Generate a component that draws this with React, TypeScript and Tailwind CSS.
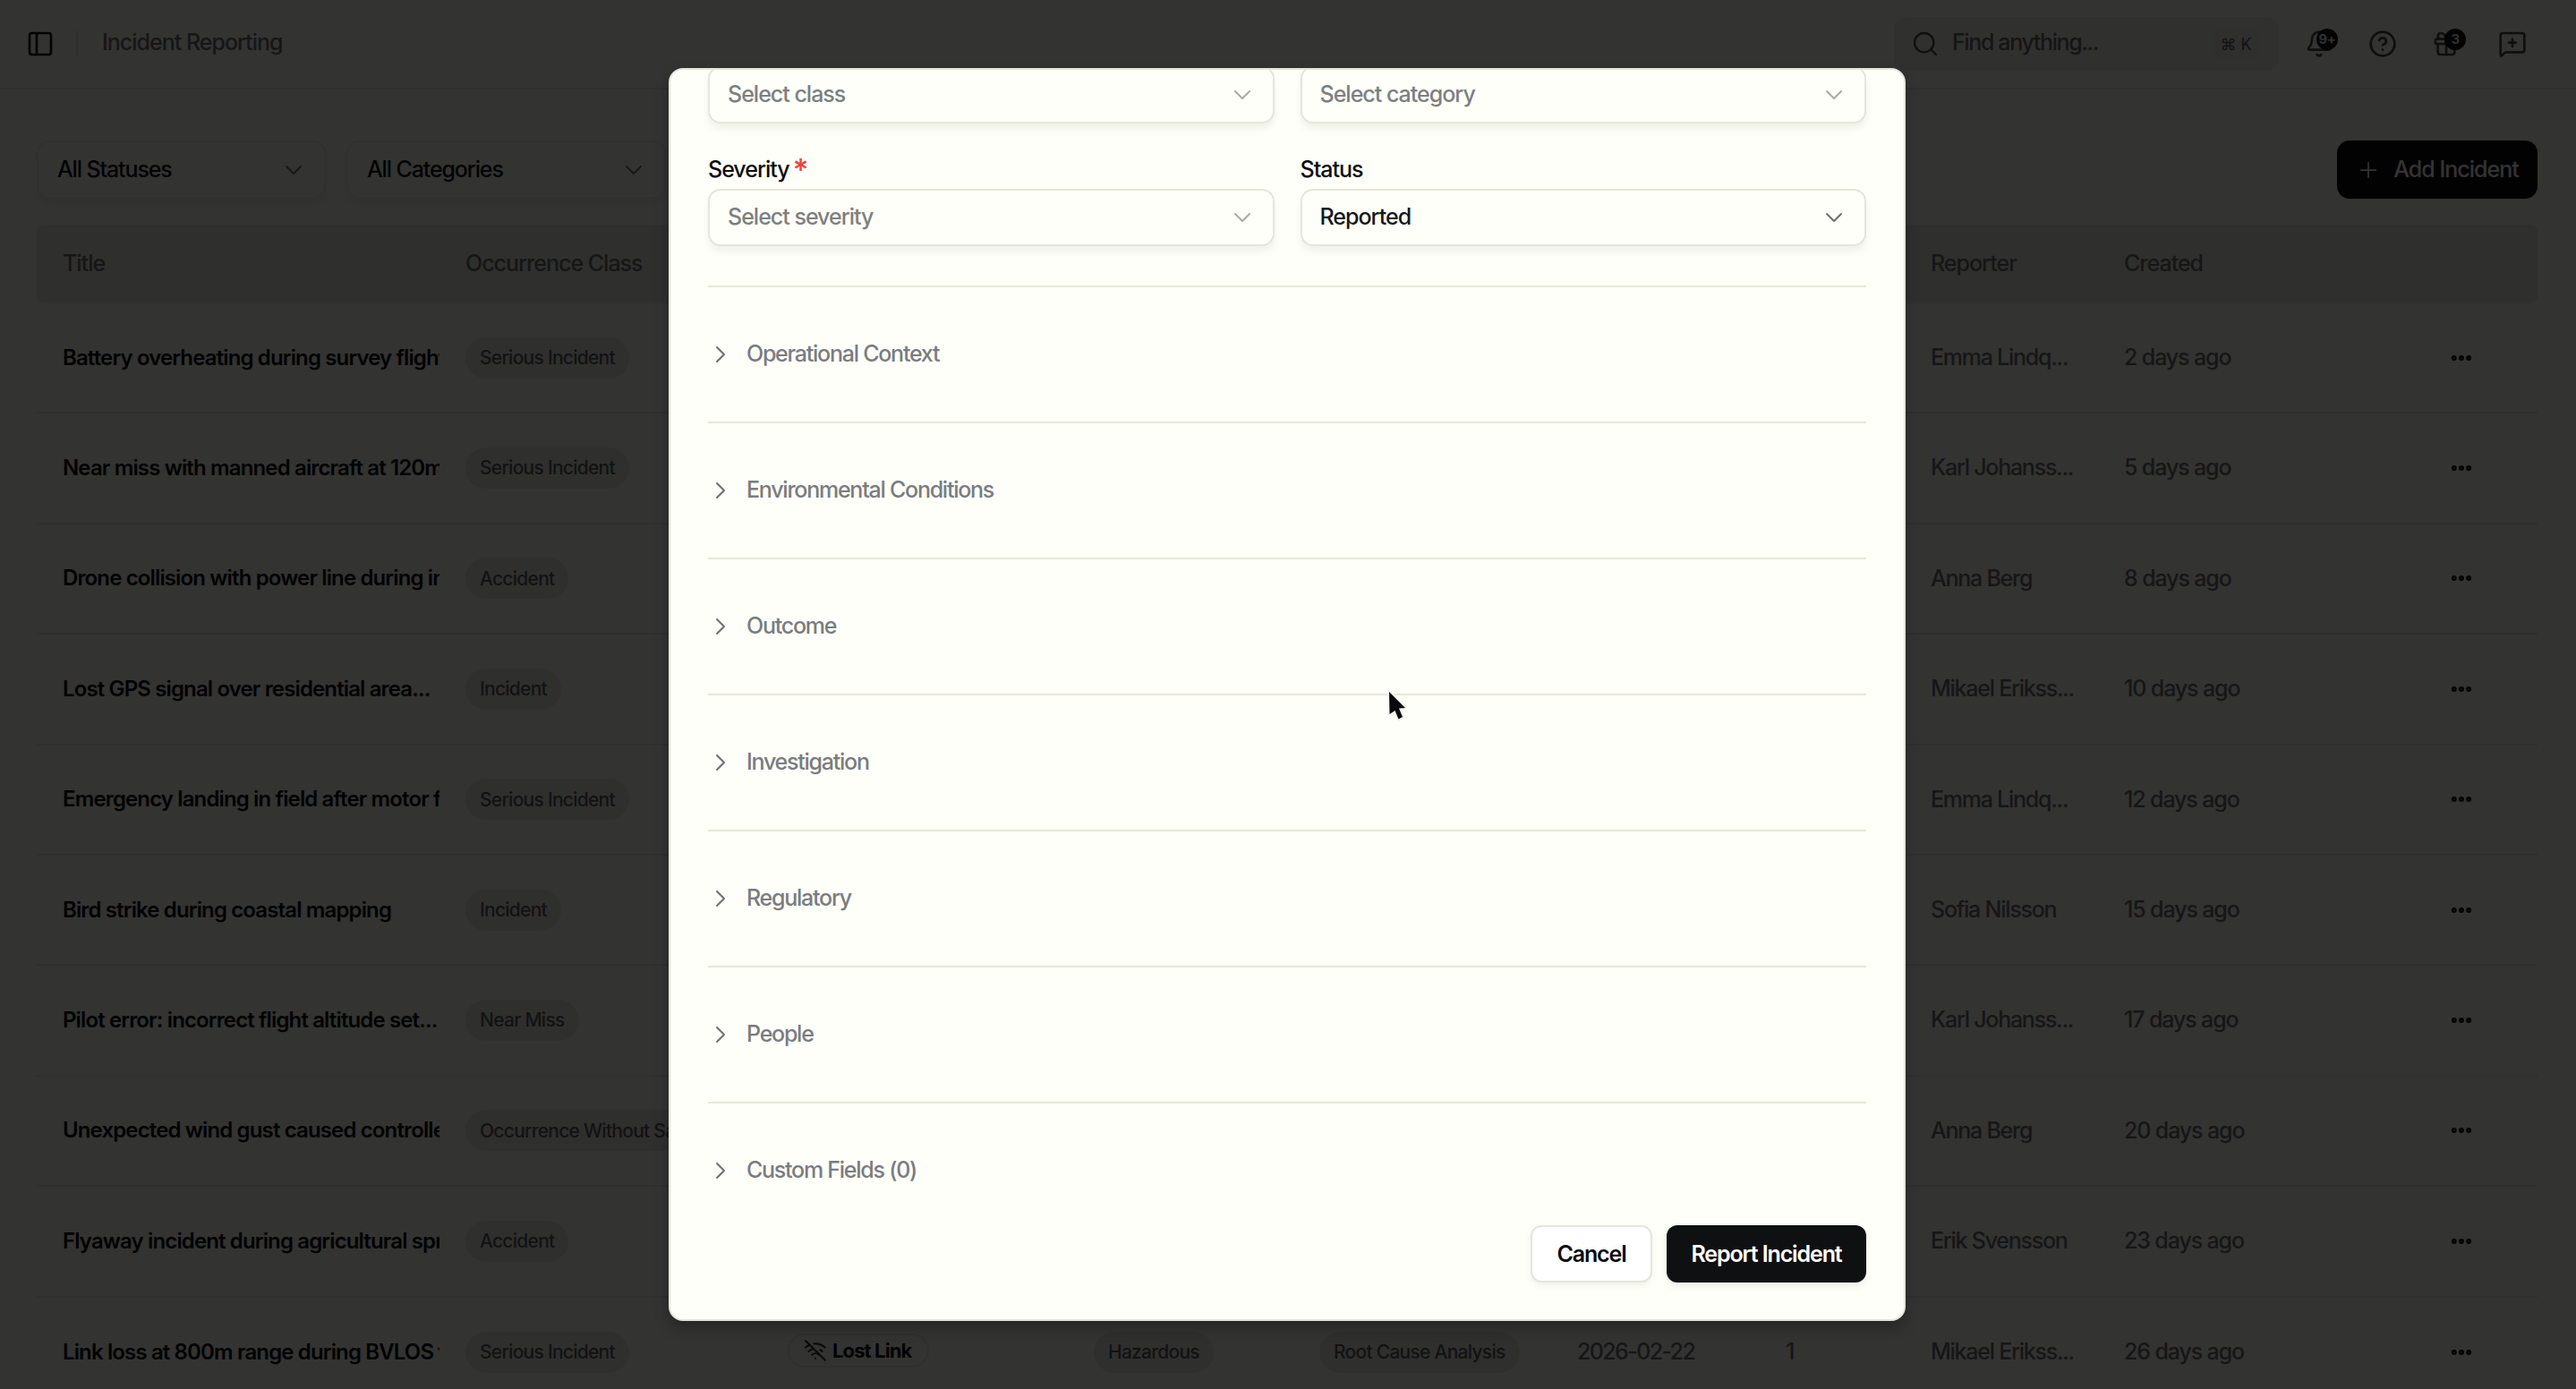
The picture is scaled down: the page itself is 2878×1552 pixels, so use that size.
import React from "react";
import { PanelLeft, Search, Bell, CircleHelp, Gift, MessageSquarePlus, ChevronDown, ChevronRight, Plus, MoreHorizontal, WifiOff } from "lucide-react";

const rows = [
  ["Battery overheating during survey flight...", "Serious Incident", "Emma Lindq...", "2 days ago"],
  ["Near miss with manned aircraft at 120m...", "Serious Incident", "Karl Johanss...", "5 days ago"],
  ["Drone collision with power line during in...", "Accident", "Anna Berg", "8 days ago"],
  ["Lost GPS signal over residential area...", "Incident", "Mikael Erikss...", "10 days ago"],
  ["Emergency landing in field after motor f...", "Serious Incident", "Emma Lindq...", "12 days ago"],
  ["Bird strike during coastal mapping", "Incident", "Sofia Nilsson", "15 days ago"],
  ["Pilot error: incorrect flight altitude set...", "Near Miss", "Karl Johanss...", "17 days ago"],
  ["Unexpected wind gust caused controlled...", "Occurrence Without Safety Effect", "Anna Berg", "20 days ago"],
  ["Flyaway incident during agricultural spray...", "Accident", "Erik Svensson", "23 days ago"],
  ["Link loss at 800m range during BVLOS test...", "Serious Incident", "Mikael Erikss...", "26 days ago"],
];

const sections = ["Operational Context", "Environmental Conditions", "Outcome", "Investigation", "Regulatory", "People", "Custom Fields (0)"];

const grid = "grid grid-cols-[479px_360px_342px_252px_288px_233px_162px_216px_300px_1fr] items-center";

function Pill({ children }: { children: React.ReactNode }) {
  return (
    <span className="inline-flex h-[46px] items-center whitespace-nowrap rounded-full bg-[#ecece6] px-[16px] text-[21px] font-medium tracking-[-0.035em] text-[#5c5c60]">
      {children}
    </span>
  );
}

function SelectBox({ text, placeholder }: { text: string; placeholder?: boolean }) {
  return (
    <div className="flex h-[64px] items-center justify-between rounded-[14px] border-2 border-[#e5e5da] bg-[#fefff9] pl-[20px] pr-[18px] shadow-[0_6px_8px_rgba(0,0,0,0.06)]">
      <span className={placeholder ? "text-[25px] font-medium tracking-[-0.04em] text-[#7d7f80]" : "text-[25px] font-medium tracking-[-0.04em] text-[#17171a]"}>{text}</span>
      <ChevronDown size={32} strokeWidth={1.5} className={placeholder ? "text-[#a9aba3]" : "text-[#6f706e]"} />
    </div>
  );
}

function Badge({ label, className }: { label: string; className: string }) {
  return (
    <span className={"absolute flex h-[24px] w-[24px] items-center justify-center rounded-full bg-[#0f0f11] text-[15px] font-semibold tracking-[-0.02em] text-[#fefff9] " + className}>
      {label}
    </span>
  );
}

export default function App() {
  return (
    <div className="relative h-[1552px] w-full overflow-hidden bg-[#fefff9] [font-family:Inter,'Liberation_Sans','DejaVu_Sans',sans-serif]">
      <header className="flex h-[100px] items-center border-b-2 border-[#e8e8de] pl-[29px] pr-[55px]">
        <PanelLeft size={32} strokeWidth={2} className="text-[#0f0f11]" />
        <span className="ml-[24px] h-[30px] w-[2px] bg-[#e8e8de]" />
        <span className="ml-[27px] pb-[2px] text-[25px] font-medium tracking-[-0.04em] text-[#6f7074]">Incident Reporting</span>
        <div className="ml-auto flex h-[60px] w-[430px] items-center rounded-[14px] bg-[#f0f0e8] pl-[19px] pr-[21px]">
          <Search size={32} strokeWidth={1.75} className="text-[#4a4a4e]" />
          <span className="ml-[14px] pb-[2px] text-[25px] font-medium tracking-[-0.055em] text-[#6a6b6f]">Find anything...</span>
          <span className="ml-auto flex h-[40px] w-[54px] items-center justify-center rounded-[8px] bg-[#ecece4] text-[18px] text-[#55565a]">⌘ K</span>
        </div>
        <div className="ml-[29px] flex items-center gap-[39px]">
          <span className="relative block h-[32px] w-[32px]">
            <Bell size={32} strokeWidth={2} className="text-[#4a4a4e]" />
            <Badge label="9+" className="left-[13px] top-[-1px]" />
          </span>
          <CircleHelp size={32} strokeWidth={2} className="text-[#4a4a4e]" />
          <span className="relative block h-[32px] w-[32px]">
            <Gift size={32} strokeWidth={2} className="text-[#4a4a4e]" />
            <Badge label="3" className="left-[14px] top-[-1px]" />
          </span>
          <MessageSquarePlus size={32} strokeWidth={2} className="ml-[3px] text-[#4a4a4e]" />
        </div>
      </header>

      <main className="pl-[41px] pr-[43px] pt-[57px]">
        <div className="flex h-[65px] items-stretch gap-[23px]">
          <div className="flex w-[323px] items-center justify-between rounded-[14px] border-2 border-[#f0f0e6] pl-[21px] pr-[18px] shadow-[0_6px_8px_rgba(0,0,0,0.06)]">
            <span className="text-[25px] font-medium tracking-[-0.045em] text-[#111114]">All Statuses</span>
            <ChevronDown size={32} strokeWidth={1.5} className="text-[#777]" />
          </div>
          <div className="flex w-[357px] items-center justify-between rounded-[14px] border-2 border-[#f0f0e6] pl-[21px] pr-[18px] shadow-[0_6px_8px_rgba(0,0,0,0.06)]">
            <span className="text-[25px] font-medium tracking-[-0.045em] text-[#111114]">All Categories</span>
            <ChevronDown size={32} strokeWidth={1.5} className="text-[#777]" />
          </div>
          <button className="ml-auto flex w-[224px] items-center justify-center gap-[14px] rounded-[14px] bg-[#0c0d10] text-[25px] font-medium tracking-[-0.04em] text-[#fefff9]">
            <Plus size={28} strokeWidth={1.5} />
            Add Incident
          </button>
        </div>

        <div className={grid + " mt-[29px] h-[88px] rounded-[8px] bg-[#e9e9e1] text-[25px] font-medium tracking-[-0.04em] text-[#6f7074]"}>
          <span className="pl-[29px]">Title</span>
          <span>Occurrence Class</span>
          <span />
          <span />
          <span />
          <span />
          <span />
          <span>Reporter</span>
          <span>Created</span>
          <span />
        </div>

        {rows.map((r, i) => (
          <div key={r[0]} className={grid + " h-[123.4px] border-b-2 border-[#ecece3] last:border-b-0"}>
            <div className="ml-[29px] w-[421px] overflow-hidden whitespace-nowrap text-[24px] font-semibold tracking-[-0.036em] text-[#0c0d10]">{r[0]}</div>
            <div><Pill>{r[1]}</Pill></div>
            {i === rows.length - 1 ? (
              <>
                <div>
                  <span className="relative top-[-2px] inline-flex h-[38px] items-center gap-[6px] rounded-full border-2 border-[#ecece4] pl-[16px] pr-[18px] text-[22px] font-bold tracking-[-0.04em] text-[#0c0d10]">
                    <WifiOff size={26} strokeWidth={2} className="text-[#38383c]" />
                    Lost Link
                  </span>
                </div>
                <div><Pill>Hazardous</Pill></div>
                <div><Pill>Root Cause Analysis</Pill></div>
                <div className="text-[25px] font-medium tracking-[-0.065em] text-[#6f7074]">2026-02-22</div>
                <div className="text-[25px] font-medium text-[#6f7074]">1</div>
              </>
            ) : (
              <>
                <span />
                <span />
                <span />
                <span />
                <span />
              </>
            )}
            <div className="whitespace-nowrap text-[25px] font-medium tracking-[-0.05em] text-[#6f7074]">{r[2]}</div>
            <div className="whitespace-nowrap text-[25px] font-medium tracking-[-0.045em] text-[#6f7074]">{r[3]}</div>
            <div className="flex justify-end pr-[71px]">
              <MoreHorizontal size={28} strokeWidth={3} className="text-[#0c0d10]" />
            </div>
          </div>
        ))}
      </main>

      <div className="absolute inset-0 bg-black/80" />

      <div className="absolute left-[747px] top-[76px] flex h-[1400px] w-[1382px] flex-col overflow-hidden rounded-[16px] border-2 border-[#e4e4d8] bg-[#fefff9] shadow-[0_8px_16px_rgba(0,0,0,0.25)]">
        <div className="flex-1 overflow-hidden px-[42px]">
          <div className="mt-[-4px] grid grid-cols-2 gap-x-[29px] gap-y-[37px]">
            <SelectBox text="Select class" placeholder />
            <SelectBox text="Select category" placeholder />
            <div>
              <div className="mb-[8px] flex h-[28px] items-center gap-[4px] text-[25px] font-medium leading-[28px] tracking-[-0.04em] text-[#0c0d10]">
                <span>Severity</span>
                <span className="pt-[2px] text-[34px] leading-[28px] text-[#ef3f3f]">*</span>
              </div>
              <SelectBox text="Select severity" placeholder />
            </div>
            <div>
              <div className="mb-[8px] h-[28px] text-[25px] font-medium leading-[28px] tracking-[-0.04em] text-[#0c0d10]">Status</div>
              <SelectBox text="Reported" />
            </div>
          </div>
          <div className="mt-[44px]">
            {sections.map((s) => (
              <div key={s} className="flex h-[152px] items-center gap-[13px] border-t-2 border-[#e6e6da]">
                <ChevronRight size={32} strokeWidth={1.5} className="ml-[-2px] text-[#6f706e]" />
                <span className="text-[25px] font-medium tracking-[-0.05em] text-[#7a7c7e]">{s}</span>
              </div>
            ))}
          </div>
        </div>
        <div className="flex justify-end gap-[16px] px-[42px] pb-[41px]">
          <button className="h-[64px] w-[136px] rounded-[12px] border-2 border-[#e5e5da] bg-white pt-[1px] text-[25px] font-semibold tracking-[-0.045em] text-[#0c0d10] shadow-[0_4px_8px_rgba(0,0,0,0.05)]">Cancel</button>
          <button className="h-[64px] w-[223px] rounded-[12px] bg-[#0f1012] pt-[1px] text-[25px] font-semibold tracking-[-0.045em] text-white shadow-[0_4px_8px_rgba(0,0,0,0.08)]">Report Incident</button>
        </div>
      </div>

      <svg className="absolute left-[1549px] top-[771px]" width="26" height="38" viewBox="0 0 26 38">
        <path d="M3 2 L21 20 L14 20.5 L18 30 L13.5 32.5 L9.5 23 L3.5 27 Z" fill="#0a0a0c" stroke="#f4f4ee" strokeWidth="4" strokeLinejoin="round" paintOrder="stroke" />
      </svg>
    </div>
  );
}
